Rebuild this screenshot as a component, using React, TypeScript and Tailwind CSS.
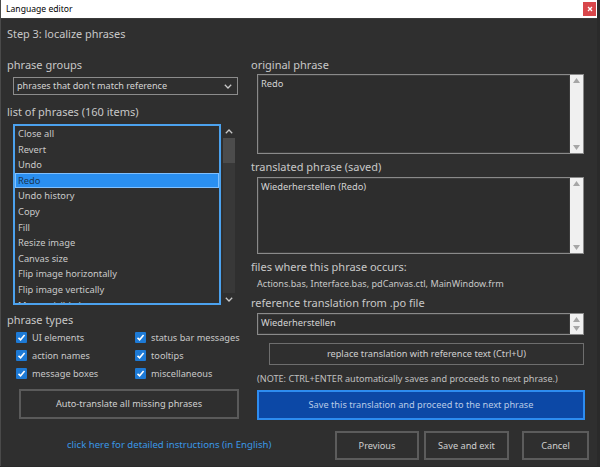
import React from "react";

const F = { fontFamily: '"Noto Sans", "Open Sans", sans-serif' };

const items = [
  "Close all",
  "Revert",
  "Undo",
  "Redo",
  "Undo history",
  "Copy",
  "Fill",
  "Resize image",
  "Canvas size",
  "Flip image horizontally",
  "Flip image vertically",
  "Merge visible layers",
];

function Check({ label }: { label: string }) {
  return (
    <div className="flex items-center h-[17.8px]">
      <div className="w-[11px] h-[11px] bg-[#1d7ad6] rounded-[1px] flex items-center justify-center shrink-0">
        <svg width="9" height="9" viewBox="0 0 9 9">
          <polyline points="1.5,4.8 3.6,6.8 7.6,2" fill="none" stroke="#ffffff" strokeWidth="1.6" />
        </svg>
      </div>
      <span className="ml-[5px] text-[9.2px] text-[#c8c8c8] whitespace-nowrap">{label}</span>
    </div>
  );
}

function LightScroll() {
  return (
    <div className="w-[13px] bg-[#f0f0f0] flex flex-col justify-between items-center py-[3px] shrink-0">
      <svg width="7" height="5" viewBox="0 0 7 5">
        <polygon points="0,5 3.5,0 7,5" fill="#a6a6a6" />
      </svg>
      <svg width="7" height="5" viewBox="0 0 7 5">
        <polygon points="0,0 3.5,5 7,0" fill="#a6a6a6" />
      </svg>
    </div>
  );
}

function TextBox({ h, text }: { h: string; text: string }) {
  return (
    <div className={`${h} ml-[6px] w-[327px] border border-[#8a8a8a] flex`}>
      <div className="flex-1 border border-[#3c3c3c] bg-[#2d2d2d] px-[2px] pt-[1px] text-[9.3px] leading-[14px] text-[#d4d4d4]">
        {text}
      </div>
      <LightScroll />
    </div>
  );
}

function Btn({ w, children }: { w: string; children: React.ReactNode }) {
  return (
    <div className={`${w} flex items-center justify-center text-[9.2px] text-[#d0d0d0] whitespace-nowrap shrink-0`}>
      {children}
    </div>
  );
}

const label = "h-[18px] leading-[18px] text-[11px] text-[#c8c8c8] whitespace-nowrap";

export default function App() {
  return (
    <div style={F} className="w-[600px] h-[467px] flex bg-[#2a2a2a]">
      <div className="w-[597px] h-[466px] flex flex-col bg-[#2f2f2f] border-l border-[#4a4a4a] shrink-0">
        {/* title bar */}
        <div className="h-[19px] bg-white border-b border-[#3a3a3a] flex items-center justify-between pl-[5px] pr-[1px]">
          <span className="text-[8.6px] text-black">Language editor</span>
          <div className="w-[13px] h-[14px] bg-[#d8464a] flex items-center justify-center">
            <svg width="6" height="6" viewBox="0 0 6 6">
              <path d="M1 1 L5 5 M5 1 L1 5" stroke="#ffffff" strokeWidth="1.3" />
            </svg>
          </div>
        </div>
        {/* body */}
        <div className="flex-1 flex flex-col pl-[6px]">
          <div className="mt-[7px] h-[16px] leading-[16px] text-[10.9px] text-[#c8c8c8]">Step 3: localize phrases</div>
          <div className="flex">
            {/* left column */}
            <div className="w-[238px] shrink-0 flex flex-col">
              <div className={`mt-[14px] ${label}`}>phrase groups</div>
              <div className="mt-[3px] ml-[6px] w-[225px] h-[18px] border border-[#8c8c8c] flex items-center justify-between pl-[3px] pr-[5px]">
                <span className="text-[9.1px] text-[#d4d4d4]">phrases that don't match reference</span>
                <svg width="8" height="5" viewBox="0 0 8 5">
                  <polyline points="0.8,0.8 4,4 7.2,0.8" fill="none" stroke="#c8c8c8" strokeWidth="1.3" />
                </svg>
              </div>
              <div className={`mt-[8px] ${label}`}>list of phrases (160 items)</div>
              <div className="mt-[3px] ml-[6px] h-[181px] flex">
                <div className="w-[208px] h-full border-2 border-[#4ca2ee] overflow-hidden bg-[#2f2f2f]">
                  {items.map((t) =>
                    t === "Redo" ? (
                      <div
                        key={t}
                        className="h-[15.6px] leading-[13.6px] pl-[2px] text-[9.3px] bg-[#2a8ff0] text-[#1a3652] border border-[#7fc0ff]"
                      >
                        {t}
                      </div>
                    ) : (
                      <div key={t} className="h-[15.6px] leading-[15.6px] pl-[3px] text-[9.3px] text-[#cacaca]">
                        {t}
                      </div>
                    )
                  )}
                </div>
                <div className="ml-[2px] w-[12px] flex flex-col items-center">
                  <svg className="mt-[5px]" width="8" height="5" viewBox="0 0 8 5">
                    <polyline points="0.8,4.2 4,1 7.2,4.2" fill="none" stroke="#c8c8c8" strokeWidth="1.3" />
                  </svg>
                  <div className="mt-[4px] w-full flex-1 bg-[#383838] flex flex-col">
                    <div className="h-[25px] bg-[#4c4c4c]" />
                  </div>
                  <svg className="mt-[4px] mb-[3px]" width="8" height="5" viewBox="0 0 8 5">
                    <polyline points="0.8,0.8 4,4 7.2,0.8" fill="none" stroke="#c8c8c8" strokeWidth="1.3" />
                  </svg>
                </div>
              </div>
              <div className={`mt-[6px] ${label}`}>phrase types</div>
              <div className="ml-[9px] grid grid-cols-[119px_1fr]">
                <Check label="UI elements" />
                <Check label="status bar messages" />
                <Check label="action names" />
                <Check label="tooltips" />
                <Check label="message boxes" />
                <Check label="miscellaneous" />
              </div>
              <Btn w="w-[220px] h-[30px] mt-[7px] ml-[12px] border-2 border-[#5a5a5a]">Auto-translate all missing phrases</Btn>
            </div>
            {/* right column */}
            <div className="ml-[6px] flex flex-col">
              <div className={`mt-[14px] ${label}`}>original phrase</div>
              <TextBox h="h-[80px]" text="Redo" />
              <div className={`mt-[4px] ${label}`}>translated phrase (saved)</div>
              <div className="mt-[1px]">
                <TextBox h="h-[77px]" text="Wiederherstellen (Redo)" />
              </div>
              <div className="mt-[5px] h-[16px] leading-[16px] text-[11px] text-[#c8c8c8]">files where this phrase occurs:</div>
              <div className="ml-[6px] mt-[1px] h-[16px] leading-[16px] text-[9.1px] text-[#c8c8c8]">
                Actions.bas, Interface.bas, pdCanvas.ctl, MainWindow.frm
              </div>
              <div className={`mt-[2px] ${label}`}>reference translation from .po file</div>
              <div className="mt-[1px]">
                <TextBox h="h-[22px]" text="Wiederherstellen" />
              </div>
              <Btn w="w-[315px] h-[22px] mt-[8px] ml-[18px] border border-[#6e6e6e]">
                replace translation with reference text (Ctrl+U)
              </Btn>
              <div className="mt-[6px] ml-[6px] h-[16px] leading-[16px] text-[9.1px] text-[#c0c0c0] whitespace-nowrap">
                (NOTE: CTRL+ENTER automatically saves and proceeds to next phrase.)
              </div>
              <div className="mt-[3px] ml-[6px] w-[328px] h-[30px] bg-[#0c48a6] border-2 border-[#2d8cf0] flex items-center justify-center text-[9.2px] text-[#b9cbe6]">
                Save this translation and proceed to the next phrase
              </div>
            </div>
          </div>
          {/* bottom row */}
          <div className="mt-[11px] flex items-center">
            <div className="ml-[60px] w-[268px] text-[9.6px] text-[#3a97e6] whitespace-nowrap">
              click here for detailed instructions (in English)
            </div>
            <Btn w="w-[84px] h-[29px] border-2 border-[#5c5c5c]">Previous</Btn>
            <Btn w="w-[85px] h-[29px] ml-[5px] border-2 border-[#5c5c5c]">Save and exit</Btn>
            <Btn w="w-[67px] h-[29px] ml-[13px] border-2 border-[#5c5c5c]">Cancel</Btn>
          </div>
        </div>
      </div>
    </div>
  );
}
